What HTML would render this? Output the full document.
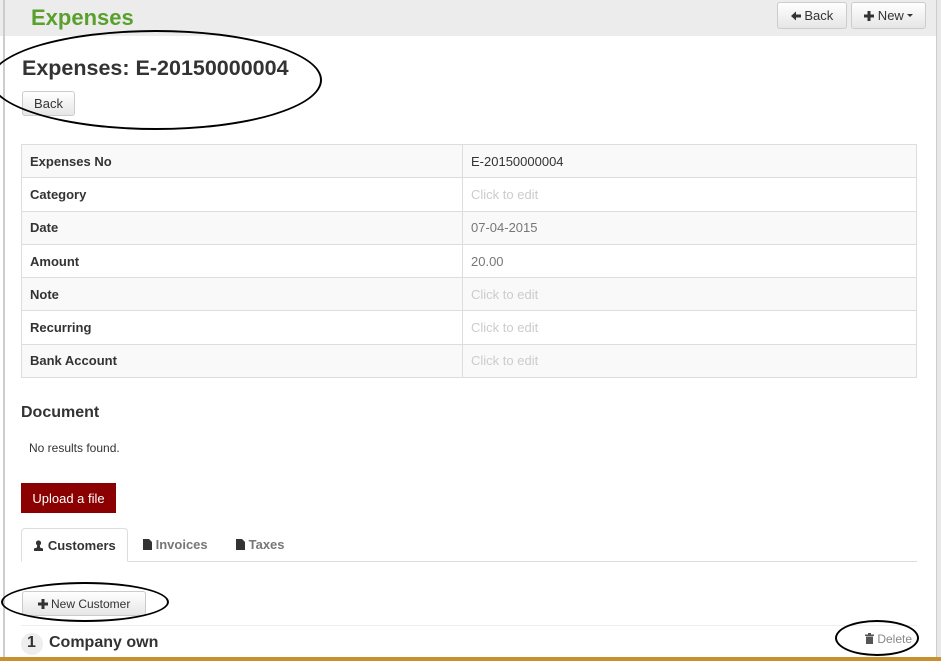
<!DOCTYPE html>
<html><head><meta charset="utf-8"><style>
*{box-sizing:border-box}
body{margin:0;width:941px;height:661px;overflow:hidden;background:#fff;font-family:"Liberation Sans",sans-serif;font-size:13px;color:#333;position:relative}
.abs{position:absolute}
.hdr{left:0;top:0;width:941px;height:36px;background:#ececec}
.lb{left:3px;top:0;width:2px;height:657px;background:#ccc}
.rb{left:936px;top:0;width:5px;height:657px;background:#e8e8e8;border-left:1px solid #ccc}
.btn{position:absolute;border:1px solid #ccc;border-radius:3px;background:linear-gradient(#fff,#e6e6e6);font-size:13px;color:#333;display:flex;align-items:center;justify-content:center}
table{position:absolute;left:21px;top:144px;width:896px;border-collapse:collapse;border:1px solid #ddd}
td{height:33.3px;border:1px solid #ddd;padding:0 8px;font-size:13px}
td:first-child{width:441px;font-weight:bold}
tr:nth-child(odd) td{background:#f9f9f9}
.ce{color:#ccc}
.tri{display:inline-block;width:0;height:0;border-left:3px solid transparent;border-right:3px solid transparent;border-top:3px solid #333;vertical-align:middle;margin-left:3px}
.ell{position:absolute;border:2px solid #000;border-radius:50%}
svg{vertical-align:-1px}
</style></head><body>
<div class="abs hdr"></div>
<div class="abs lb"></div>
<div class="abs rb"></div>
<div class="abs" style="left:31px;top:5px;font-size:22px;font-weight:bold;color:#5aa02c">Expenses</div>
<div class="btn" style="left:777px;top:2px;width:70px;height:27px"><svg width="10" height="10" viewBox="0 0 10 10"><path d="M0 5L5 0.5V3.5H10V6.5H5V9.5Z" fill="#333"/></svg>&nbsp;Back</div>
<div class="btn" style="left:851px;top:2px;width:75px;height:27px"><svg width="10" height="10" viewBox="0 0 10 10"><path d="M3.5 0H6.5V3.5H10V6.5H6.5V10H3.5V6.5H0V3.5H3.5Z" fill="#333"/></svg>&nbsp;New<span class="tri"></span></div>
<div class="abs" style="left:22px;top:56px;font-size:21.5px;font-weight:bold">Expenses: E-20150000004</div>
<div class="btn" style="left:22px;top:91px;width:53px;height:25px">Back</div>
<div class="ell" style="left:-10px;top:30px;width:332px;height:100px"></div>
<table>
<tr><td>Expenses No</td><td>E-20150000004</td></tr>
<tr><td>Category</td><td class="ce">Click to edit</td></tr>
<tr><td>Date</td><td style="color:#777">07-04-2015</td></tr>
<tr><td>Amount</td><td style="color:#777">20.00</td></tr>
<tr><td>Note</td><td class="ce">Click to edit</td></tr>
<tr><td>Recurring</td><td class="ce">Click to edit</td></tr>
<tr><td>Bank Account</td><td class="ce">Click to edit</td></tr>
</table>
<div class="abs" style="left:21px;top:404px;font-size:16px;font-weight:bold">Document</div>
<div class="abs" style="left:29px;top:441px;font-size:12px">No results found.</div>
<div class="abs" style="left:21px;top:483px;width:95px;height:30px;background:#8b0000;color:#fff;font-size:13px;display:flex;align-items:center;justify-content:center">Upload a file</div>
<div class="abs" style="left:21px;top:561px;width:896px;height:1px;background:#ddd"></div>
<div class="abs" style="left:21px;top:528px;width:107px;height:34px;border:1px solid #ddd;border-bottom:1px solid #fff;border-radius:4px 4px 0 0;background:#fff;font-size:13px;font-weight:bold;display:flex;align-items:center;justify-content:center"><svg width="11" height="11" viewBox="0 0 11 11"><circle cx="5.5" cy="3" r="2.6" fill="#333"/><path d="M4 5.5H7V7.5L10 8.5V11H1V8.5L4 7.5Z" fill="#333"/></svg>&nbsp;Customers</div>
<div class="abs" style="left:143px;top:537px;font-size:13px;font-weight:bold;color:#777"><svg width="9" height="11" viewBox="0 0 9 11"><path d="M0 0H6L9 3V11H0Z" fill="#333"/></svg>&nbsp;Invoices</div>
<div class="abs" style="left:236px;top:537px;font-size:13px;font-weight:bold;color:#777"><svg width="9" height="11" viewBox="0 0 9 11"><path d="M0 0H6L9 3V11H0Z" fill="#333"/></svg>&nbsp;Taxes</div>
<div class="btn" style="left:22px;top:591px;width:124px;height:25px;font-size:12px"><svg width="10" height="10" viewBox="0 0 10 10"><path d="M3.5 0H6.5V3.5H10V6.5H6.5V10H3.5V6.5H0V3.5H3.5Z" fill="#333"/></svg>&nbsp;New Customer</div>
<div class="ell" style="left:1px;top:582px;width:168px;height:40px"></div>
<div class="abs" style="left:21px;top:625px;width:896px;height:1px;background:#eee"></div>
<div class="abs" style="left:21px;top:633px;width:22px;height:22px;border-radius:50%;background:#eee"></div>
<div class="abs" style="left:27px;top:634px;font-size:16px;font-weight:bold">1</div>
<div class="abs" style="left:49px;top:634px;font-size:16px;font-weight:bold">Company own</div>
<div class="abs" style="left:865px;top:632px;font-size:12px;color:#888"><svg width="9" height="11" viewBox="0 0 9 11"><path d="M0 1.5H9V3H0ZM3 0H6V1.5H3ZM1 3.5H8V11H1Z" fill="#555"/></svg> Delete</div>
<div class="ell" style="left:835px;top:620px;width:84px;height:36px"></div>
<div class="abs" style="left:0;top:657px;width:941px;height:4px;background:#c9902f"></div>
</body></html>
